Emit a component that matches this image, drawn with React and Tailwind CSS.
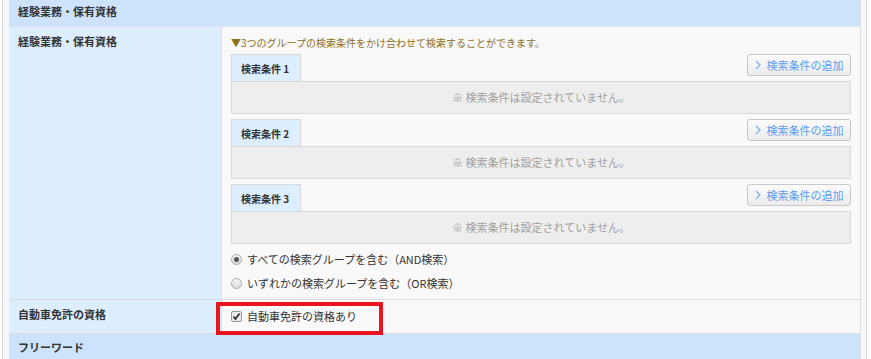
const font = { fontFamily: '"Noto Sans CJK JP", "Liberation Sans", sans-serif' };

function Chevron() {
  return (
    <svg width="6" height="10" viewBox="0 0 6 10" className="mr-[6px]">
      <polyline points="1,1 5,5 1,9" fill="none" stroke="#7fb0ee" strokeWidth="1.2" />
    </svg>
  );
}

function ConditionGroup({ n }) {
  return (
    <div>
      <div className="flex h-[27px] items-start justify-between">
        <div className="flex h-[27px] w-[70px] items-center border-x border-t border-[#d9d9d9] bg-[#ddeeff] pl-[9px] text-[10px] font-bold text-[#333]">
          検索条件 {n}
        </div>
        <button className="flex h-[22px] w-[104px] items-center justify-center rounded-[3px] border border-[#c8c8c8] bg-gradient-to-b from-[#fbfbfb] to-[#ececec] text-[11px] text-[#5b9cf2]">
          <Chevron />
          検索条件の追加
        </button>
      </div>
      <div className="flex h-[33px] items-center justify-center border border-[#d9d9d9] bg-[#eeeeee] text-[11px] text-[#a0a0a0]">
        ※ 検索条件は設定されていません。
      </div>
    </div>
  );
}

function Radio({ checked, label }) {
  return (
    <label className="flex h-[24px] items-center text-[11px] text-[#333]">
      <span className="mr-[5px] flex h-[11px] w-[11px] items-center justify-center rounded-full border border-[#a9a9a9] bg-gradient-to-b from-[#f4f4f4] to-[#dcdcdc]">
        {checked && <span className="h-[5px] w-[5px] rounded-full bg-[#555]" />}
      </span>
      {label}
    </label>
  );
}

export default function App() {
  return (
    <div className="h-[359px] w-[871px] overflow-hidden bg-white" style={font}>
      <div className="ml-[2px] h-[359px] w-[865px] border-x border-[#d6d6d6] bg-[#f5f9fd] pl-[6px] pr-[5px]">
        <div className="border-r border-[#dcdcdc]">
          <div className="h-[27px] border-b border-[#dbe4ee] bg-[#cde3fb] pl-[9px] pt-[3px] text-[11px] font-bold leading-[16px] text-[#333]">
            経験業務・保有資格
          </div>

          <div className="flex border-b border-[#dcdcdc]">
            <div className="w-[213px] border-r border-[#dcdcdc] bg-[#ddeeff] pl-[9px] pt-[6px] text-[11px] font-bold leading-[16px] text-[#333]">
              経験業務・保有資格
            </div>
            <div className="flex-1 bg-[#f9f9f9] px-[9px] pb-[4px] pt-[9px]">
              <p className="text-[10px] leading-[14px] text-[#8d6e1e]">
                ▼3つのグループの検索条件をかけ合わせて検索することができます。
              </p>
              <div className="mt-[4px] flex flex-col gap-[5px]">
                <ConditionGroup n={1} />
                <ConditionGroup n={2} />
                <ConditionGroup n={3} />
              </div>
              <div className="mt-[3px]">
                <Radio checked label="すべての検索グループを含む（AND検索）" />
                <Radio label="いずれかの検索グループを含む（OR検索）" />
              </div>
            </div>
          </div>

          <div className="flex h-[34px] border-b border-[#dcdcdc]">
            <div className="w-[213px] border-r border-[#dcdcdc] bg-[#ddeeff] pl-[9px] pt-[6px] text-[11px] font-bold leading-[16px] text-[#333]">
              自動車免許の資格
            </div>
            <div className="relative flex flex-1 items-center bg-[#f9f9f9] px-[9px]">
              <label className="flex items-center text-[11px] text-[#333]">
                <span className="mr-[5px] flex h-[11px] w-[11px] items-center justify-center rounded-[2px] border border-[#999] bg-[#ececec]">
                  <svg width="9" height="9" viewBox="0 0 9 9">
                    <polyline points="1.5,4.5 3.5,7 7.5,1.5" fill="none" stroke="#333" strokeWidth="1.8" />
                  </svg>
                </span>
                自動車免許の資格あり
              </label>
              <div className="absolute left-[-6px] top-[2px] h-[33px] w-[167px] border-[4px] border-[#e8141e]" />
            </div>
          </div>

          <div className="h-[26px] bg-[#cde3fb] pl-[9px] pt-[5px] text-[11px] font-bold leading-[16px] text-[#333]">
            フリーワード
          </div>
        </div>
      </div>
    </div>
  );
}
